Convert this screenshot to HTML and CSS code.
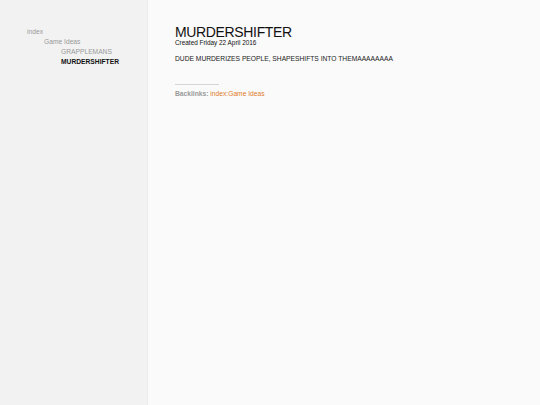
FILE: index.html
```html
<!DOCTYPE html>
<html>
<head>
<meta charset="utf-8">
<link rel="stylesheet" href="styles.css">
</head>
<body>
<div class="layout">
  <nav class="sidebar">
    <ul class="tree">
      <li class="lvl0"><a>index</a></li>
      <li class="lvl1"><a>Game Ideas</a></li>
      <li class="lvl2"><a>GRAPPLEMANS</a></li>
      <li class="lvl2 current"><a>MURDERSHIFTER</a></li>
    </ul>
  </nav>
  <main class="content">
    <h1 class="title">MURDERSHIFTER</h1>
    <div class="created">Created Friday 22 April 2016</div>
    <p class="body">DUDE MURDERIZES PEOPLE, SHAPESHIFTS INTO THEMAAAAAAAA</p>
    <hr class="rule">
    <div class="backlinks"><span class="bl-label">Backlinks:</span> <a class="bl-link">index:Game Ideas</a></div>
  </main>
</div>
</body>
</html>
```
FILE: styles.css
```css
html, body {
  margin: 0;
  padding: 0;
  height: 100%;
}
body {
  font-family: "Liberation Sans", Arial, sans-serif;
  background: #fafafa;
  color: #111;
}
.layout {
  display: flex;
  height: 100%;
}
.sidebar {
  width: 147px;
  flex: none;
  background: #f2f2f2;
  border-right: 1px solid #ececec;
  padding-top: 27px;
}
.tree {
  list-style: none;
  margin: 0;
  padding: 0;
  font-size: 6.7px;
  line-height: 10px;
}
.tree a { color: #999; }
.lvl0 { padding-left: 27px; }
.lvl1 { padding-left: 44px; }
.lvl2 { padding-left: 61px; }
.tree .current a { color: #111; font-weight: bold; }
.content {
  flex: 1;
  padding: 25px 0 0 27px;
}
.title {
  margin: 0;
  font-size: 14px;
  letter-spacing: -0.35px;
  font-weight: normal;
  line-height: 14px;
}
.created {
  font-size: 6.4px;
  line-height: 7px;
}
.body {
  font-size: 6.7px;
  margin: 8px 0 0 0;
  line-height: 9px;
  color: #222;
}
.rule {
  width: 44px;
  margin: 21px 0 0 0;
  border: none;
  border-top: 1px solid #d4d4d4;
  height: 0;
}
.backlinks {
  margin-top: 4px;
  font-size: 6.7px;
  line-height: 9px;
}
.bl-label { color: #999; font-weight: bold; }
.bl-link { color: #e07b2a; }
```
